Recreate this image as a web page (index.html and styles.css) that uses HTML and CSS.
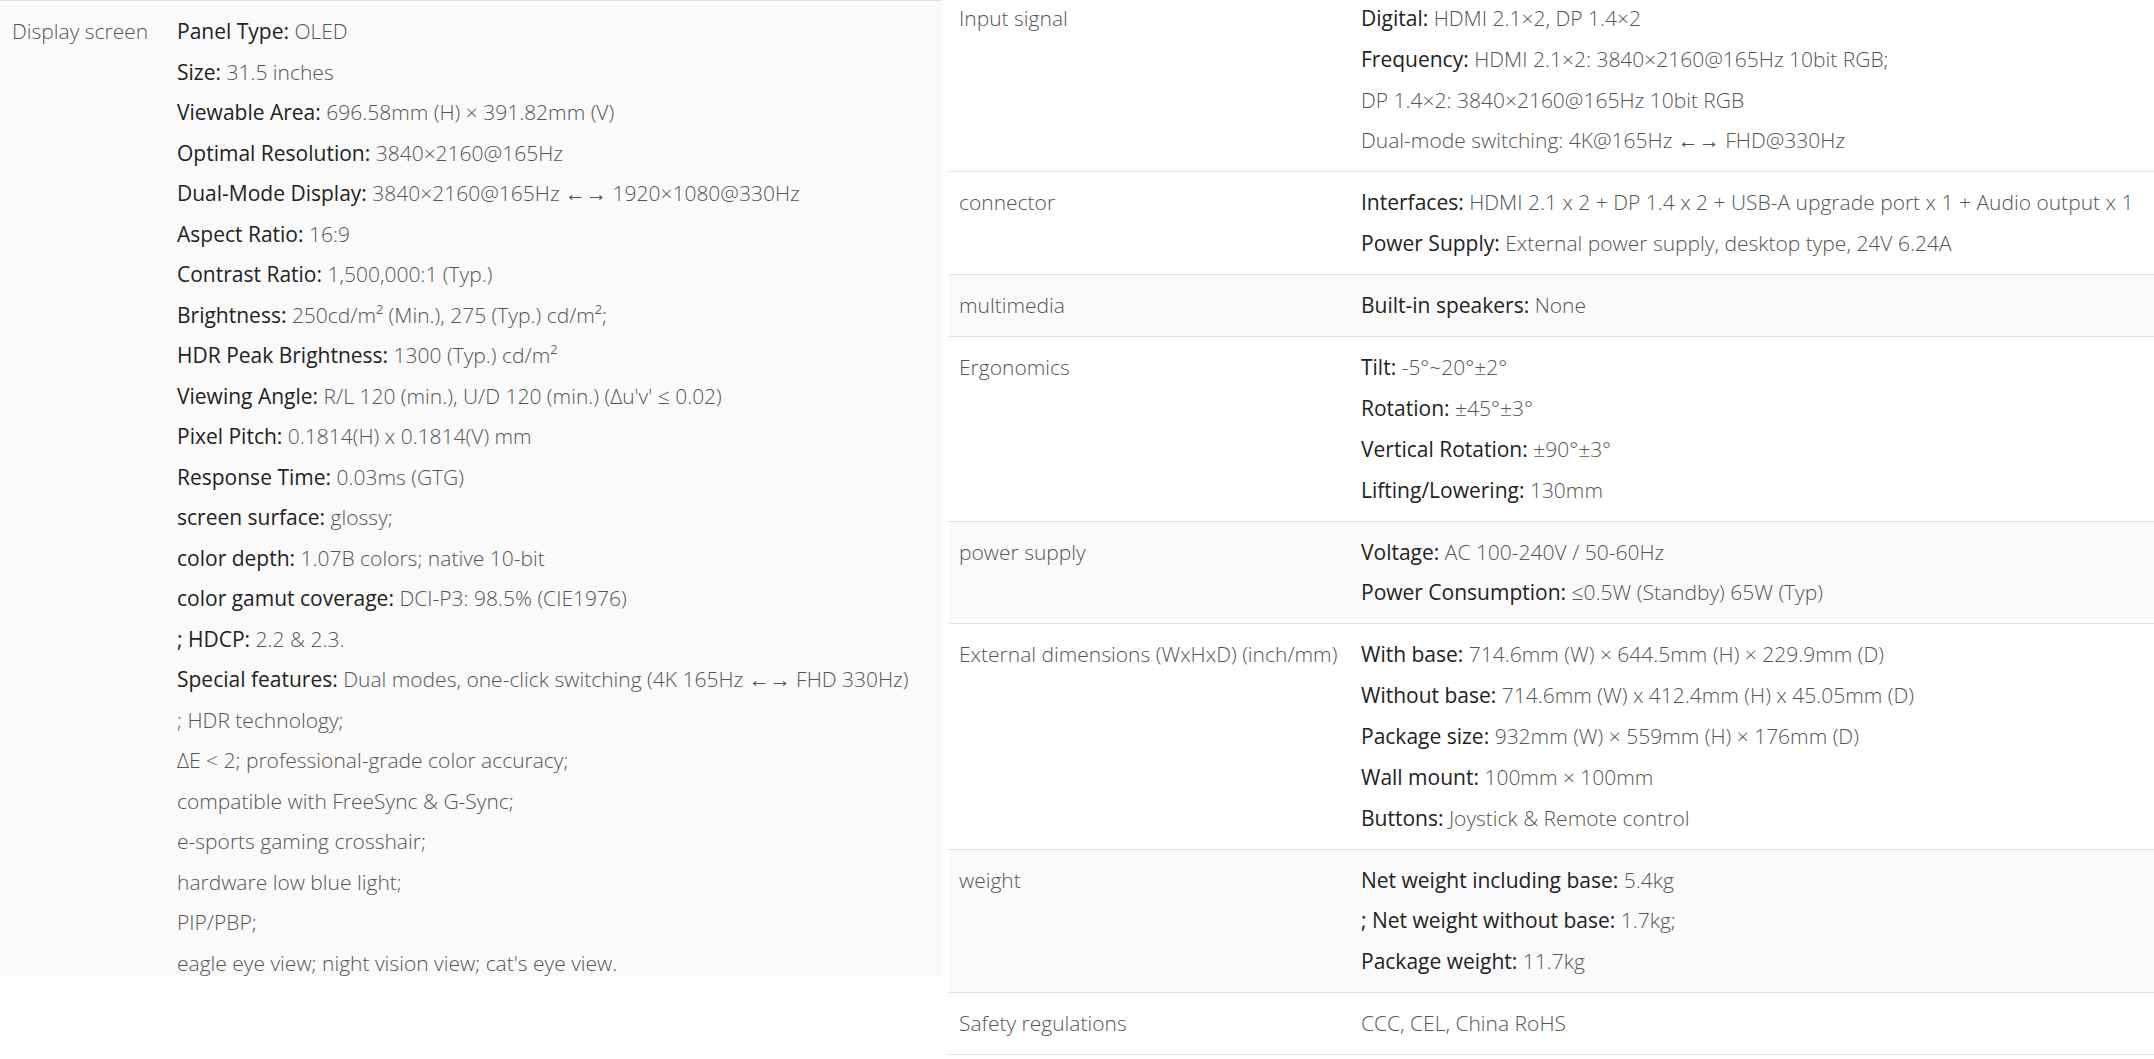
FILE: index.html
```html
<!DOCTYPE html>
<html lang="en">
<head>
<meta charset="utf-8">
<title>Specifications</title>
<link rel="stylesheet" href="styles.css">
</head>
<body>
<div class="specs">
  <div class="panel-left">
    <div class="label">Display screen</div>
    <div class="values">
      <p><b>Panel Type:</b> OLED</p>
      <p><b>Size:</b> 31.5 inches</p>
      <p><b>Viewable Area:</b> 696.58mm (H) × 391.82mm (V)</p>
      <p><b>Optimal Resolution:</b> 3840×2160@165Hz</p>
      <p><b>Dual-Mode Display:</b> 3840×2160@165Hz ←→ 1920×1080@330Hz</p>
      <p><b>Aspect Ratio:</b> 16:9</p>
      <p><b>Contrast Ratio:</b> 1,500,000:1 (Typ.)</p>
      <p><b>Brightness:</b> 250cd/m² (Min.), 275 (Typ.) cd/m²;</p>
      <p><b>HDR Peak Brightness:</b> 1300 (Typ.) cd/m²</p>
      <p><b>Viewing Angle:</b> R/L 120 (min.), U/D 120 (min.) (Δu'v' ≤ 0.02)</p>
      <p><b>Pixel Pitch:</b> 0.1814(H) x 0.1814(V) mm</p>
      <p><b>Response Time:</b> 0.03ms (GTG)</p>
      <p><b>screen surface:</b> glossy;</p>
      <p><b>color depth:</b> 1.07B colors; native 10-bit</p>
      <p><b>color gamut coverage:</b> DCI-P3: 98.5% (CIE1976)</p>
      <p><b>; HDCP:</b> 2.2 &amp; 2.3.</p>
      <p><b>Special features:</b> Dual modes, one-click switching (4K 165Hz ←→ FHD 330Hz)</p>
      <p>; HDR technology;</p>
      <p>ΔE &lt; 2; professional-grade color accuracy;</p>
      <p>compatible with FreeSync &amp; G-Sync;</p>
      <p>e-sports gaming crosshair;</p>
      <p>hardware low blue light;</p>
      <p>PIP/PBP;</p>
      <p>eagle eye view; night vision view; cat's eye view.</p>
    </div>
  </div>
  <div class="panel-right">
    <div class="row first">
      <div class="label">Input signal</div>
      <div class="values">
        <p><b>Digital:</b> HDMI 2.1×2, DP 1.4×2</p>
        <p><b>Frequency:</b> HDMI 2.1×2: 3840×2160@165Hz 10bit RGB;</p>
        <p>DP 1.4×2: 3840×2160@165Hz 10bit RGB</p>
        <p>Dual-mode switching: 4K@165Hz ←→ FHD@330Hz</p>
      </div>
    </div>
    <div class="row">
      <div class="label">connector</div>
      <div class="values">
        <p><b>Interfaces:</b> HDMI 2.1 x 2 + DP 1.4 x 2 + USB-A upgrade port x 1 + Audio output x 1</p>
        <p><b>Power Supply:</b> External power supply, desktop type, 24V 6.24A</p>
      </div>
    </div>
    <div class="row shaded">
      <div class="label">multimedia</div>
      <div class="values">
        <p><b>Built-in speakers:</b> None</p>
      </div>
    </div>
    <div class="row">
      <div class="label">Ergonomics</div>
      <div class="values">
        <p><b>Tilt:</b> -5°~20°±2°</p>
        <p><b>Rotation:</b> ±45°±3°</p>
        <p><b>Vertical Rotation:</b> ±90°±3°</p>
        <p><b>Lifting/Lowering:</b> 130mm</p>
      </div>
    </div>
    <div class="row shaded">
      <div class="label">power supply</div>
      <div class="values">
        <p><b>Voltage:</b> AC 100-240V / 50-60Hz</p>
        <p><b>Power Consumption:</b> ≤0.5W (Standby) 65W (Typ)</p>
      </div>
    </div>
    <div class="row">
      <div class="label">External dimensions (WxHxD) (inch/mm)</div>
      <div class="values">
        <p><b>With base:</b> 714.6mm (W) × 644.5mm (H) × 229.9mm (D)</p>
        <p><b>Without base:</b> 714.6mm (W) x 412.4mm (H) x 45.05mm (D)</p>
        <p><b>Package size:</b> 932mm (W) × 559mm (H) × 176mm (D)</p>
        <p><b>Wall mount:</b> 100mm × 100mm</p>
        <p><b>Buttons:</b> Joystick &amp; Remote control</p>
      </div>
    </div>
    <div class="row shaded">
      <div class="label">weight</div>
      <div class="values">
        <p><b>Net weight including base:</b> 5.4kg</p>
        <p><b>; Net weight without base:</b> 1.7kg;</p>
        <p><b>Package weight:</b> 11.7kg</p>
      </div>
    </div>
    <div class="row">
      <div class="label">Safety regulations</div>
      <div class="values">
        <p>CCC, CEL, China RoHS</p>
      </div>
    </div>
  </div>
</div>
</body>
</html>
```

FILE: styles.css
```css
html, body {
  margin: 0;
  padding: 0;
  background: #ffffff;
}

body {
  font-family: "Open Sans", "Noto Sans", "Liberation Sans", sans-serif;
  font-size: 21px;
  font-weight: 300;
  color: #555555;
}

.specs {
  display: flex;
  align-items: flex-start;
  gap: 7px;
}

.panel-left {
  width: 942px;
  flex: none;
  display: flex;
  background: #fafafa;
  border-top: 1px solid #e3e3e3;
  padding: 17px 0 0 0;
  box-sizing: border-box;
}

.panel-left .label {
  width: 177px;
  padding-left: 12px;
  flex: none;
  box-sizing: border-box;
}

.panel-left .values {
  gap: 13.5px;
}

.label {
  line-height: 27px;
  color: #555555;
  font-weight: 300;
}

.values {
  display: flex;
  flex-direction: column;
  gap: 13.8px;
}

.values p {
  margin: 0;
  line-height: 27px;
  white-space: nowrap;
}

.values b {
  font-weight: 400;
  color: #222222;
}

.panel-right {
  flex: 1;
  min-width: 0;
  display: flex;
  flex-direction: column;
}

.row {
  display: flex;
  padding: 17px 0;
  border-bottom: 1px solid #e0e0e0;
}

.row.first {
  padding-top: 5px;
}

.row.shaded {
  background: #fafafa;
}

.panel-right .label {
  width: 412px;
  padding-left: 10px;
  flex: none;
  box-sizing: border-box;
}
```
